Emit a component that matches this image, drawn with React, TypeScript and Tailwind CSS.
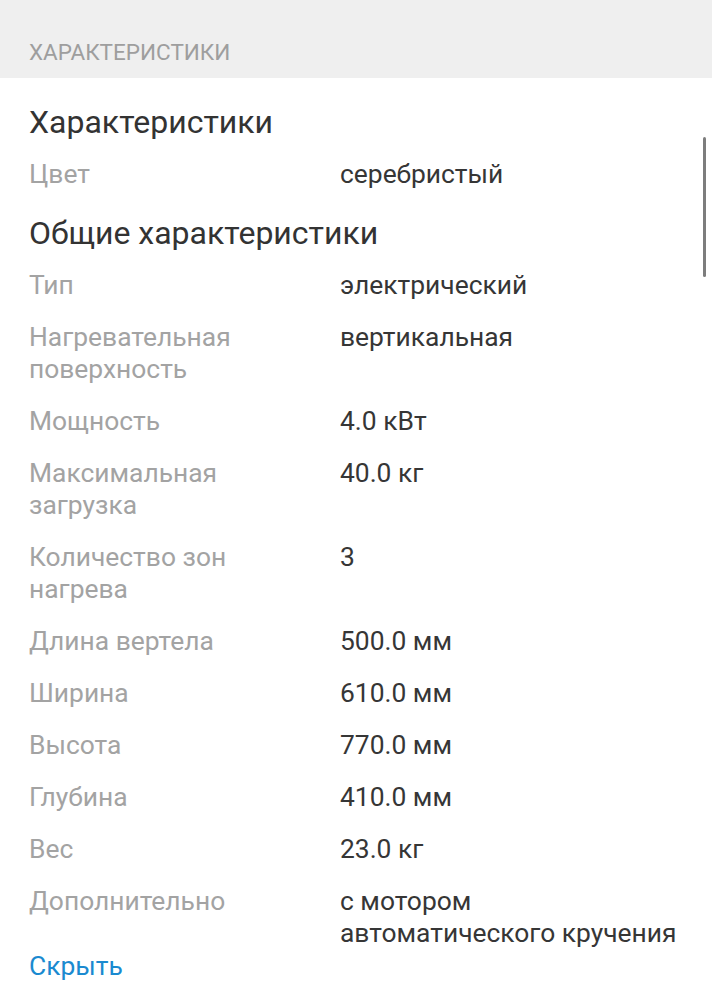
import { FC } from "react";

type Row = { label: string; value: string };

const SECTIONS: { title: string; rows: Row[] }[] = [
  {
    title: "Характеристики",
    rows: [{ label: "Цвет", value: "серебристый" }],
  },
  {
    title: "Общие характеристики",
    rows: [
      { label: "Тип", value: "электрический" },
      { label: "Нагревательная поверхность", value: "вертикальная" },
      { label: "Мощность", value: "4.0 кВт" },
      { label: "Максимальная загрузка", value: "40.0 кг" },
      { label: "Количество зон нагрева", value: "3" },
      { label: "Длина вертела", value: "500.0 мм" },
      { label: "Ширина", value: "610.0 мм" },
      { label: "Высота", value: "770.0 мм" },
      { label: "Глубина", value: "410.0 мм" },
      { label: "Вес", value: "23.0 кг" },
      { label: "Дополнительно", value: "с мотором автоматического кручения" },
    ],
  },
];

const App: FC = () => {
  return (
    <div className="relative w-[712px] min-h-[1000px] bg-white font-['Roboto',sans-serif]">
      {/* Section header */}
      <div className="h-[78px] bg-[#efefef] px-[29px] pt-[36px]">
        <span className="block text-[22.5px] leading-[32px] text-[#9e9e9e] uppercase">
          Характеристики
        </span>
      </div>

      <div className="px-[29px]">
        {SECTIONS.map((section, i) => (
          <div key={section.title}>
            <h3
              className={`${i === 0 ? "mt-[28px]" : "mt-[27px]"} text-[32px] leading-[32px] text-[#333333]`}
            >
              {section.title}
            </h3>
            {section.rows.map((row) => (
              <div key={row.label} className="flex pt-[20px] text-[26.4px] leading-[32px]">
                <div className="w-[311px] shrink-0 pr-[22px] text-[#a3a3a3]">{row.label}</div>
                <div className="w-[343px] text-[#363636]">{row.value}</div>
              </div>
            ))}
          </div>
        ))}
        <button className="mt-[1px] text-[26.4px] leading-[32px] text-[#1a8ad0]">Скрыть</button>
      </div>

      {/* Scrollbar thumb */}
      <div className="absolute right-[6px] top-[137px] h-[140px] w-[3px] rounded-full bg-[#7d7d7d]" />
    </div>
  );
};

export default App;
